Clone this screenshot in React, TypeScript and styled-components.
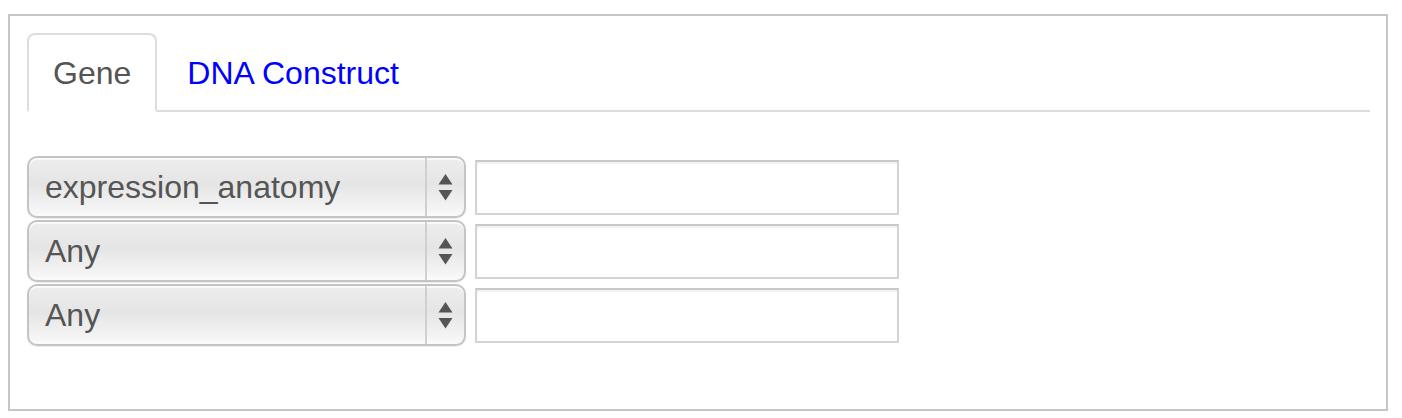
import React from "react";
import styled, { createGlobalStyle } from "styled-components";

const GlobalStyle = createGlobalStyle`
  body {
    margin: 0;
    padding: 14px 8px 8px;
    background: #ffffff;
    font-family: "Liberation Sans", Arial, sans-serif;
  }
`;

const Panel = styled.div`
  width: 1380px;
  box-sizing: border-box;
  border: 2px solid #c2c7c1;
  padding: 17px 16px 63px 17px;
`;

const Tabs = styled.ul`
  display: flex;
  margin: 0 0 44px;
  padding: 0;
  list-style: none;
  border-bottom: 2px solid #dddddd;
`;

const Tab = styled.li<{ $active?: boolean }>`
  margin: 0 4px -2px 0;
  padding: 18px 24px 17px;
  line-height: 40px;
  font-size: 32px;
  border: 2px solid ${({ $active }) => ($active ? "#dddddd" : "transparent")};
  border-bottom-color: ${({ $active }) => ($active ? "#ffffff" : "transparent")};
  border-radius: 8px 8px 0 0;
  background: ${({ $active }) => ($active ? "#ffffff" : "transparent")};
  color: ${({ $active }) => ($active ? "#555555" : "#0000ff")};
  cursor: pointer;
`;

const Rows = styled.div`
  display: flex;
  flex-direction: column;
  gap: 2px;
`;

const Row = styled.div`
  display: flex;
  align-items: center;
  gap: 9px;
`;

const SelectBox = styled.div`
  display: flex;
  width: 439px;
  height: 62px;
  box-sizing: border-box;
  border: 2px solid #c4c4c4;
  border-radius: 10px;
  background: linear-gradient(#ededed, #e5e5e5 45%, #f3f3f3 85%, #fbfbfb);
  box-shadow: inset 0 2px 0 rgba(255, 255, 255, 0.7), 0 1px 1px rgba(0, 0, 0, 0.08);
`;

const SelectValue = styled.div`
  flex: 1;
  padding-left: 16px;
  line-height: 58px;
  font-size: 32px;
  color: #555555;
  border-right: 2px solid #d0d0d0;
`;

const SelectArrows = styled.div`
  width: 37px;
  display: flex;
  align-items: center;
  justify-content: center;
`;

const TextInput = styled.input`
  width: 424px;
  height: 55px;
  box-sizing: border-box;
  border: 2px solid #d4d4d4;
  border-top-color: #c8c8c8;
  border-radius: 0;
  background: #ffffff;
  box-shadow: inset 0 2px 2px rgba(0, 0, 0, 0.06);
  font-size: 28px;
  padding: 0 12px;
  outline: none;
`;

const Arrows = () => (
  <svg width="15" height="27" viewBox="0 0 15 27">
    <path d="M7.5 0 L14.5 10.5 L0.5 10.5 Z" fill="#555555" />
    <path d="M0.5 16 L14.5 16 L7.5 26.5 Z" fill="#555555" />
  </svg>
);

const rows = ["expression_anatomy", "Any", "Any"];

const App = () => (
  <>
    <GlobalStyle />
    <Panel>
      <Tabs>
        <Tab $active>Gene</Tab>
        <Tab>DNA Construct</Tab>
      </Tabs>
      <Rows>
        {rows.map((value, i) => (
          <Row key={i}>
            <SelectBox>
              <SelectValue>{value}</SelectValue>
              <SelectArrows>
                <Arrows />
              </SelectArrows>
            </SelectBox>
            <TextInput type="text" />
          </Row>
        ))}
      </Rows>
    </Panel>
  </>
);

export default App;
